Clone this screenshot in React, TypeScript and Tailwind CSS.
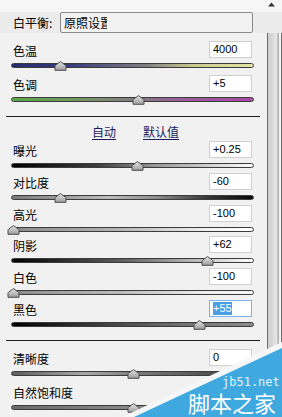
import React from "react";

type Row = {
  label: string;
  value: string;
  thumb: number;
  track: string;
  selected?: boolean;
  h: string;
};

const top: Row[] = [
  { label: "色温", value: "4000", thumb: 60, h: "h-[34px]", track: "bg-[linear-gradient(to_right,#262a70,#3a3e7c_25%,#7d7d84_55%,#c9c98f_75%,#e6e6a2)]" },
  { label: "色调", value: "+5", thumb: 138, h: "h-[34px]", track: "bg-[linear-gradient(to_right,#5aa848,#74985f_25%,#7f7f7f_50%,#9a5d98_70%,#a848a6)]" },
];

const mid: Row[] = [
  { label: "曝光", value: "+0.25", thumb: 137, h: "h-[32px]", track: "bg-[linear-gradient(to_right,#000000,#3c3c3c_35%,#9a9a9a_60%,#ffffff)]" },
  { label: "对比度", value: "-60", thumb: 60, h: "h-[32px]", track: "bg-[linear-gradient(to_right,#7a7a7a,#bdbdbd_40%,#8c8c8c_60%,#3a3a3a_80%,#050505)]" },
  { label: "高光", value: "-100", thumb: 13, h: "h-[32px]", track: "bg-[linear-gradient(to_right,#8a8a8a,#b5b5b5_45%,#f0f0f0_80%,#ffffff)]" },
  { label: "阴影", value: "+62", thumb: 207, h: "h-[32px]", track: "bg-[linear-gradient(to_right,#000000,#5c5c5c_45%,#a8a8a8_70%,#ffffff)]" },
  { label: "白色", value: "-100", thumb: 13, h: "h-[32px]", track: "bg-[linear-gradient(to_right,#8c8c8c,#bcbcbc_45%,#eeeeee_80%,#f8f8f8)]" },
  { label: "黑色", value: "+55", thumb: 199, h: "h-[32px]", selected: true, track: "bg-[linear-gradient(to_right,#000000,#3a3a3a_35%,#707070_70%,#8a8a8a)]" },
];

const bottom: Row[] = [
  { label: "清晰度", value: "0", thumb: 133, h: "h-[34px]", track: "bg-[linear-gradient(to_right,#5e5e5e,#a8a8a8_30%,#6e6e6e_60%,#3a3a3a)]" },
  { label: "自然饱和度", value: "", thumb: 133, h: "h-[34px]", track: "bg-[linear-gradient(to_right,#6a6a6a,#8a8a8a_50%,#6a6a6a)]" },
];

function Thumb({ x }: { x: number }) {
  return (
    <svg
      className="absolute top-[-3px]"
      style={{ left: x - 18 }}
      width="13"
      height="10"
      viewBox="0 0 13 10"
    >
      <defs>
        <linearGradient id="tg" x1="0" y1="0" x2="0" y2="1">
          <stop offset="0" stopColor="#e4e4e4" />
          <stop offset="1" stopColor="#9c9c9c" />
        </linearGradient>
      </defs>
      <path
        d="M1 9.3 V5.2 Q1 4.6 1.6 4.2 L6 0.9 Q6.5 0.5 7 0.9 L11.4 4.2 Q12 4.6 12 5.2 V9.3 Z"
        fill="url(#tg)"
        stroke="#4e4e4e"
        strokeWidth="1"
      />
    </svg>
  );
}

function Group({ r }: { r: Row }) {
  return (
    <div className={`${r.h} flex flex-col`}>
      <div className="h-[17px] flex justify-between">
        <span className="pl-[13px] pt-[3px] leading-[14px]">{r.label}</span>
        {r.value !== "" ? (
          <div
            className={
              r.selected
                ? "mr-[15px] w-[43px] h-[17px] border border-[#7db3e6] bg-white flex items-center pl-[3px]"
                : "mr-[15px] w-[43px] h-[17px] border border-[#cfcfcf] bg-white flex items-center pl-[3px]"
            }
          >
            <span
              className={
                r.selected
                  ? "font-['Liberation_Sans',sans-serif] text-[11px] leading-[13px] bg-[#4a9fe3] text-white"
                  : "font-['Liberation_Sans',sans-serif] text-[11px] leading-[13px] text-black"
              }
            >
              {r.value}
            </span>
          </div>
        ) : null}
      </div>
      <div className={`mt-[5px] ml-[11px] mr-[13px] h-[5px] relative rounded-full border border-[#3c3c3c] ${r.track}`}>
        <Thumb x={r.thumb} />
      </div>
    </div>
  );
}

export default function App() {
  return (
    <div className="w-[282px] h-[417px] relative overflow-hidden bg-[#f1f1f1] font-['Noto_Sans_CJK_SC',sans-serif] text-[12px] text-black">
      <div className="h-[12px] bg-[#f6f6f6] flex justify-end pr-[7px] pt-[2px]">
        <svg width="7" height="5" viewBox="0 0 7 5">
          <path d="M0 4.5 L3.5 0.5 L7 4.5 Z" fill="#333" />
        </svg>
      </div>
      <div className="h-[21px] bg-[#ebebeb] flex items-center">
        <span className="pl-[13px] w-[60px] leading-[14px]">白平衡:</span>
        <div className="w-[193px] h-[21px] border border-[#8a8a8a] rounded-[2px] bg-[#f2f2f2] flex items-center pl-[3px]">
          <span className="w-[43px] overflow-hidden whitespace-nowrap leading-[14px]">原照设置</span>
        </div>
      </div>
      <div className="flex h-[384px]">
        <div className="w-[267px] flex flex-col pt-[8px]">
          {top.map((r) => (
            <Group key={r.label} r={r} />
          ))}
          <div className="mt-[7px] ml-[6px] w-[254px] h-[1px] bg-[#1e1e1e]" />
          <div className="h-[24px] flex pl-[92px] pt-[8px] gap-[27px] leading-[14px] text-[#1c1c5c]">
            <span className="underline underline-offset-2">自动</span>
            <span className="underline underline-offset-2">默认值</span>
          </div>
          {mid.map((r) => (
            <Group key={r.label} r={r} />
          ))}
          <div className="mt-[8px] mb-[8px] ml-[6px] w-[254px] h-[1px] bg-[#1e1e1e]" />
          {bottom.map((r) => (
            <Group key={r.label} r={r} />
          ))}
        </div>
        <div className="w-[15px] border-l border-r border-[#6e6e6e] bg-[linear-gradient(to_right,#cbcbcb,#dedede_45%,#e6e6e6_65%,#a8a8a8_80%,#f2f2f2_86%,#f4f4f4)]" />
      </div>
      <svg className="absolute right-0 bottom-0" width="160" height="75" viewBox="0 0 160 75">
        <polygon points="160,0 160,75 0,75" fill="#f4f6f7" />
        <polygon points="160,6 160,75 12,75" fill="#3ea8df" />
      </svg>
      <span className="absolute left-[222px] top-[376px] font-['DejaVu_Sans_Mono',monospace] text-[12px] leading-[13px] text-[#e2f3fb]">
        jb51.net
      </span>
      <span className="absolute left-[188px] top-[391px] text-[22px] leading-[22px] text-white">
        脚本之家
      </span>
    </div>
  );
}
